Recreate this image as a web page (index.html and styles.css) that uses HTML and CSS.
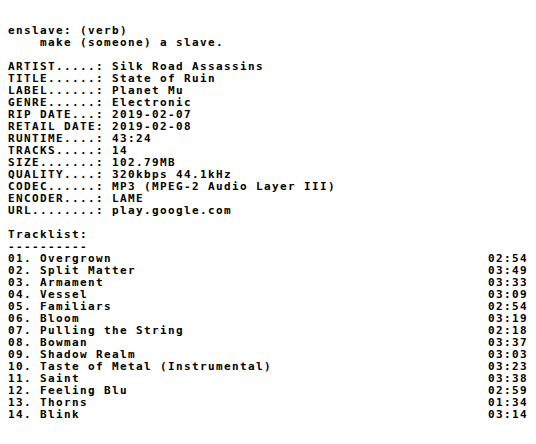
FILE: index.html
```html
<!DOCTYPE html>
<html>
<head>
<meta charset="utf-8">
<link rel="stylesheet" href="styles.css">
</head>
<body>
<pre class="nfo">enslave: (verb)
    make (someone) a slave.

ARTIST.....: Silk Road Assassins
TITLE......: State of Ruin
LABEL......: Planet Mu
GENRE......: Electronic
RIP DATE...: 2019-02-07
RETAIL DATE: 2019-02-08
RUNTIME....: 43:24
TRACKS.....: 14
SIZE.......: 102.79MB
QUALITY....: 320kbps 44.1kHz
CODEC......: MP3 (MPEG-2 Audio Layer III)
ENCODER....: LAME
URL........: play.google.com

Tracklist:
----------
01. Overgrown                                               02:54
02. Split Matter                                            03:49
03. Armament                                                03:33
04. Vessel                                                  03:09
05. Familiars                                               02:54
06. Bloom                                                   03:19
07. Pulling the String                                      02:18
08. Bowman                                                  03:37
09. Shadow Realm                                            03:03
10. Taste of Metal (Instrumental)                           03:23
11. Saint                                                   03:38
12. Feeling Blu                                             02:59
13. Thorns                                                  01:34
14. Blink                                                   03:14</pre>
</body>
</html>
```
FILE: styles.css
```css
html, body {
  background: #ffffff;
}
body {
  margin: 8px;
}
.nfo {
  margin: 0;
  padding-top: 17px;
  font-family: "DejaVu Sans Mono", monospace;
  font-weight: bold;
  font-size: 11px;
  letter-spacing: 1.378px;
  line-height: 12px;
  color: #000000;
}
```
